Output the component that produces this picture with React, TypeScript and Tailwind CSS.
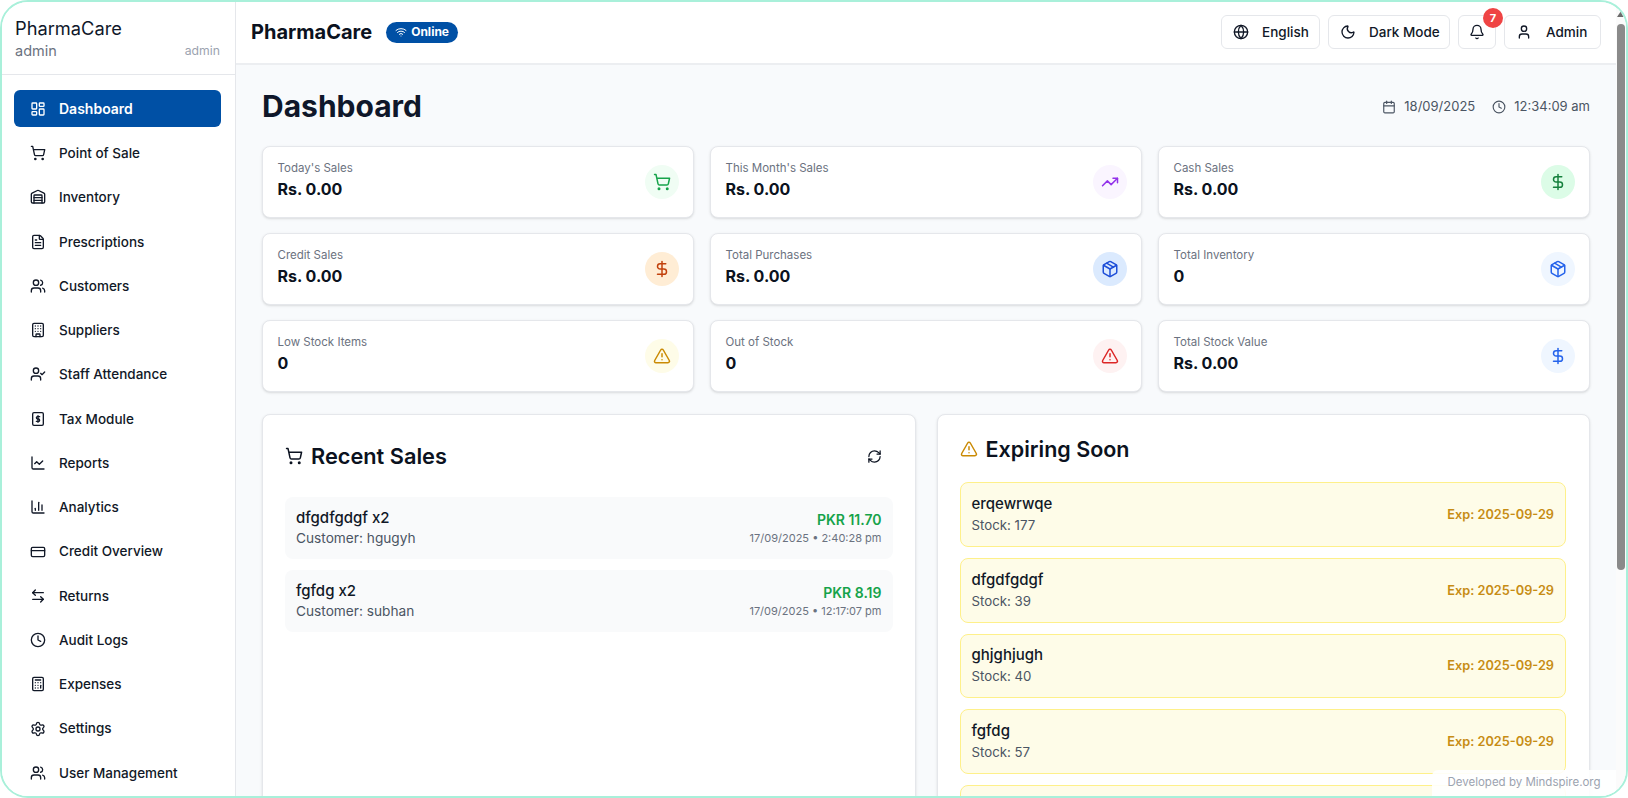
import {
  LayoutDashboard, ShoppingCart, Warehouse, FileText, Users, Building, UserCheck, ChartLine, ChartColumn,
  CreditCard, ArrowLeftRight, Clock, Calculator, Settings, Globe, Moon, Bell, User, Calendar, TrendingUp,
  DollarSign, Package, TriangleAlert, RefreshCw, Wifi,
} from "lucide-react";

function TaxIcon({ className }: { className?: string }) {
  return (
    <svg viewBox="0 0 24 24" fill="none" stroke="currentColor" strokeWidth="2" strokeLinecap="round" strokeLinejoin="round" className={className}>
      <rect x="4" y="2.5" width="16" height="19" rx="2" />
      <path d="M14.5 8.5h-3.2a1.7 1.7 0 0 0 0 3.5h1.4a1.7 1.7 0 0 1 0 3.5H9.5" />
      <path d="M12 7v10" />
    </svg>
  );
}

const nav = [
  ["Dashboard", LayoutDashboard],
  ["Point of Sale", ShoppingCart],
  ["Inventory", Warehouse],
  ["Prescriptions", FileText],
  ["Customers", Users],
  ["Suppliers", Building],
  ["Staff Attendance", UserCheck],
  ["Tax Module", TaxIcon],
  ["Reports", ChartLine],
  ["Analytics", ChartColumn],
  ["Credit Overview", CreditCard],
  ["Returns", ArrowLeftRight],
  ["Audit Logs", Clock],
  ["Expenses", Calculator],
  ["Settings", Settings],
  ["User Management", Users],
] as const;

const stats = [
  { label: "Today's Sales", value: "Rs. 0.00", Icon: ShoppingCart, circle: "bg-[#f0fdf4]", color: "text-[#16a34a]" },
  { label: "This Month's Sales", value: "Rs. 0.00", Icon: TrendingUp, circle: "bg-[#faf5ff]", color: "text-[#9333ea]" },
  { label: "Cash Sales", value: "Rs. 0.00", Icon: DollarSign, circle: "bg-[#dcfce7]", color: "text-[#15803d]" },
  { label: "Credit Sales", value: "Rs. 0.00", Icon: DollarSign, circle: "bg-[#ffedd5]", color: "text-[#c2410c]" },
  { label: "Total Purchases", value: "Rs. 0.00", Icon: Package, circle: "bg-[#dbeafe]", color: "text-[#1d4ed8]" },
  { label: "Total Inventory", value: "0", Icon: Package, circle: "bg-[#eff6ff]", color: "text-[#2563eb]" },
  { label: "Low Stock Items", value: "0", Icon: TriangleAlert, circle: "bg-[#fefce8]", color: "text-[#ca8a04]" },
  { label: "Out of Stock", value: "0", Icon: TriangleAlert, circle: "bg-[#fef2f2]", color: "text-[#dc2626]" },
  { label: "Total Stock Value", value: "Rs. 0.00", Icon: DollarSign, circle: "bg-[#eff6ff]", color: "text-[#2563eb]" },
];

const sales = [
  { name: "dfgdfgdgf x2", customer: "Customer: hgugyh", amount: "PKR 11.70", date: "17/09/2025 • 2:40:28 pm" },
  { name: "fgfdg x2", customer: "Customer: subhan", amount: "PKR 8.19", date: "17/09/2025 • 12:17:07 pm" },
];

const expiring = [
  { name: "erqewrwqe", stock: "Stock: 177" },
  { name: "dfgdfgdgf", stock: "Stock: 39" },
  { name: "ghjghjugh", stock: "Stock: 40" },
  { name: "fgfdg", stock: "Stock: 57" },
];

const font = "font-['Inter','Liberation_Sans',sans-serif]";

export default function App() {
  return (
    <div className={`${font} relative flex h-[798px] w-[1628px] overflow-hidden rounded-[28px] border-2 border-[#a9f0da] bg-white text-[#0b1220]`}>
      <aside className="flex h-full w-[234px] shrink-0 flex-col border-r border-[#e5e7eb] bg-white">
        <div className="flex h-[73px] shrink-0 flex-col border-b border-[#e5e7eb] pt-[14px] pr-[15px] pl-[13px]">
          <div className="text-[18.25px] leading-[24px] font-normal text-[#0f172a]">PharmaCare</div>
          <div className="mt-[1px] flex items-center justify-between">
            <span className="text-[14.5px] leading-[20px] text-[#6b7280]">admin</span>
            <span className="text-[12.25px] leading-[20px] text-[#9ca3af]">admin</span>
          </div>
        </div>
        <nav className="flex flex-col gap-[7.27px] pt-[15.4px] pr-[14px] pl-[12px]">
          {nav.map(([label, Icon], i) => (
            <div
              key={label}
              className={`flex h-[37px] shrink-0 items-center gap-[13px] rounded-md pl-[16px] font-medium ${i === 0 ? "bg-[#0050a5] text-[14px] font-semibold text-white" : "text-[13.5px] text-[#111827]"}`}
            >
              <Icon className="h-[16px] w-[16px] shrink-0" strokeWidth={2} />
              <span>{label}</span>
            </div>
          ))}
        </nav>
      </aside>

      <div className="flex h-full min-w-0 flex-1 flex-col">
        <header className="flex h-[63px] shrink-0 items-center justify-between border-b-2 border-[#eceef1] bg-white pr-[15px] pb-[1px] pl-[15px]">
          <div className="flex items-center gap-[14px]">
            <span className="text-[20px] font-bold text-[#0b1220]">PharmaCare</span>
            <span className="flex h-[21px] items-center gap-[4px] rounded-full bg-[#0050a5] px-[9px] text-[12px] font-bold text-white">
              <Wifi className="h-[12px] w-[12px]" />
              Online
            </span>
          </div>
          <div className="flex items-center gap-[8px] text-[13.5px] font-medium text-[#111827]">
            <div className="flex h-[34px] w-[99px] items-center gap-[13px] rounded-md border border-[#e5e7eb] pl-[11px]">
              <Globe className="h-[16px] w-[16px]" />
              English
            </div>
            <div className="flex h-[34px] w-[122px] items-center gap-[13px] rounded-md border border-[#e5e7eb] pl-[11px]">
              <Moon className="h-[16px] w-[16px]" />
              Dark Mode
            </div>
            <div className="relative flex h-[34px] w-[38px] items-center justify-center rounded-md border border-[#e5e7eb]">
              <Bell className="h-[16px] w-[16px]" />
              <span className="absolute -top-[8px] right-[-8px] flex h-[20px] w-[20px] items-center justify-center rounded-full bg-[#ef4444] text-[11px] font-bold text-white">7</span>
            </div>
            <div className="flex h-[34px] w-[97px] items-center gap-[14px] rounded-md border border-[#e5e7eb] pl-[11px]">
              <User className="h-[16px] w-[16px]" />
              Admin
            </div>
          </div>
        </header>

        <main className="min-h-0 flex-1 overflow-hidden bg-[#f8fafc] px-[26px] pt-[20px]">
          <div className="flex h-[42px] items-center justify-between">
            <h1 className="text-[30px] leading-[36px] font-bold text-[#0f172a]">Dashboard</h1>
            <div className="mt-[1px] flex items-center gap-[17px] text-[13px] text-[#4b5563]">
              <span className="flex items-center gap-[8px]"><Calendar className="h-[14px] w-[14px]" />18/09/2025</span>
              <span className="flex items-center gap-[8px]"><Clock className="h-[14px] w-[14px]" />12:34:09 am</span>
            </div>
          </div>

          <div className="mt-[19px] grid grid-cols-3 gap-x-[16px] gap-y-[15px]">
            {stats.map(({ label, value, Icon, circle, color }) => (
              <div key={label} className="flex h-[72px] items-center justify-between rounded-lg border border-[#e5e7eb] bg-white pr-[14px] pl-[14.5px] shadow-sm">
                <div className="-mt-[3px]">
                  <div className="text-[11.5px] leading-[16px] text-[#6b7280]">{label}</div>
                  <div className="mt-[1px] text-[16px] leading-[24px] font-bold text-[#0b1220]">{value}</div>
                </div>
                <div className={`flex h-[34px] w-[34px] items-center justify-center rounded-full ${circle}`}>
                  <Icon className={`h-[18px] w-[18px] ${color}`} />
                </div>
              </div>
            ))}
          </div>

          <div className="mt-[22px] grid grid-cols-2 items-start gap-[21px]">
            <section className="h-[500px] rounded-lg border border-[#e5e7eb] bg-white pt-[22px] pr-[22px] pl-[22px] shadow-sm">
              <div className="flex h-[38px] items-center justify-between">
                <div className="flex items-center gap-[8px]">
                  <ShoppingCart className="h-[18px] w-[18px] text-[#0b1220]" />
                  <h2 className="text-[21.75px] font-semibold text-[#0b1220]">Recent Sales</h2>
                </div>
                <RefreshCw className="mr-[11px] h-[15px] w-[15px] text-[#0b1220]" />
              </div>
              <div className="mt-[22px] flex flex-col gap-[11px]">
                {sales.map((s) => (
                  <div key={s.name} className="flex h-[62px] items-center justify-between rounded-lg bg-[#f9fafb] px-[11px]">
                    <div>
                      <div className="text-[15px] leading-[20px] font-medium text-[#111827]">{s.name}</div>
                      <div className="text-[13.7px] leading-[20px] text-[#4b5563]">{s.customer}</div>
                    </div>
                    <div className="text-right">
                      <div className="text-[14px] leading-[20px] font-semibold text-[#16a34a]">{s.amount}</div>
                      <div className="text-[11px] leading-[16px] text-[#6b7280]">{s.date}</div>
                    </div>
                  </div>
                ))}
              </div>
            </section>

            <section className="h-[500px] rounded-lg border border-[#e5e7eb] bg-white pt-[22px] pr-[23px] pl-[22px] shadow-sm">
              <div className="flex h-[24px] items-center gap-[8px]">
                <TriangleAlert className="h-[18px] w-[18px] text-[#ca8a04]" />
                <h2 className="text-[21.5px] font-semibold text-[#0b1220]">Expiring Soon</h2>
              </div>
              <div className="mt-[21px] flex flex-col gap-[11px]">
                {expiring.map((e) => (
                  <div key={e.name} className="flex h-[64.75px] shrink-0 items-center justify-between rounded-lg border border-[#fef08a] bg-[#fefce8] px-[11px]">
                    <div>
                      <div className="text-[15px] leading-[20px] font-medium text-[#111827]">{e.name}</div>
                      <div className="mt-[1px] text-[13.25px] leading-[20px] text-[#4b5563]">{e.stock}</div>
                    </div>
                    <div className="text-[12.75px] font-semibold text-[#c78c14]">Exp: 2025-09-29</div>
                  </div>
                ))}
                <div className="h-[64.75px] shrink-0 rounded-lg border border-[#fef08a] bg-[#fefce8]" />
              </div>
            </section>
          </div>
        </main>
      </div>

      <div className="flex h-full w-[10px] shrink-0 flex-col items-center bg-[#fbfbfb] pt-[9px]">
        <svg viewBox="0 0 8 6" className="h-[6px] w-[8px] fill-[#6b6b6b]"><path d="M4 0l4 6H0z" /></svg>
        <div className="mt-[7px] h-[546px] w-[8px] rounded-full bg-[#8a8a8a]" />
      </div>

      <div className="absolute right-[10px] bottom-0 flex h-[26px] w-[184px] items-center justify-center rounded-tl-md bg-white/90 text-[11.5px] text-[#9ca3af]">
        Developed by Mindspire.org
      </div>
    </div>
  );
}
